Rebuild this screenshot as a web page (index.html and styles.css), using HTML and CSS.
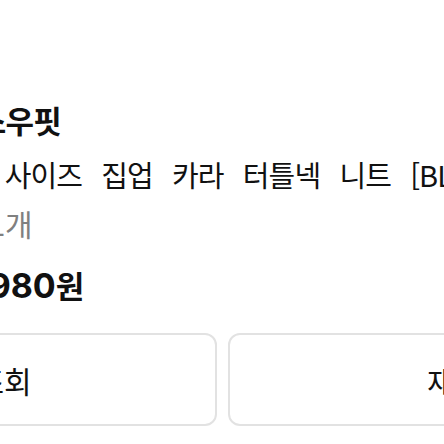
FILE: index.html
```html
<!DOCTYPE html>
<html lang="ko">
<head>
  <meta charset="UTF-8">
  <meta name="viewport" content="width=device-width, initial-scale=1.0">
  <title>주문 상세</title>
  <link rel="stylesheet" href="styles.css">
</head>
<body>
  <div class="page">
    <div class="item">
      <div class="brand">데일리 스튜디오 스우핏</div>
      <div class="name">[남녀]루즈핏 오버 사이즈 집업 카라 터틀넥 니트 [BLACK]</div>
      <div class="qty">옵션 블랙/FREE · 1개</div>
      <div class="price">결제금액 : 129,980<span class="won">원</span></div>
    </div>
    <div class="actions">
      <button class="btn">배송조회</button>
      <button class="btn">재구매</button>
    </div>
  </div>
</body>
</html>
```

FILE: styles.css
```css
html, body { margin: 0; padding: 0; background: #fff; overflow: hidden; }
body { font-family: "Noto Sans CJK KR", "Noto Sans", sans-serif; color: #111; }
.page { width: 973px; margin-left: -264px; padding-top: 100px; }
.item { padding-left: 32px; }
.brand { font-size: 31px; font-weight: 700; line-height: 40px; letter-spacing: -0.8px; white-space: nowrap; }
.name { font-size: 29px; line-height: 40px; margin-top: 14px; letter-spacing: -0.9px; word-spacing: 12px; white-space: nowrap; }
.qty { font-size: 30px; line-height: 40px; margin-top: 9px; color: #808080; letter-spacing: -0.45px; white-space: nowrap; }
.price { font-family: Inter, "Noto Sans CJK KR", sans-serif; font-size: 34px; font-weight: 700; line-height: 40px; margin-top: 22px; white-space: nowrap; }
.won { font-family: "Noto Sans CJK KR", sans-serif; font-size: 31px; }
.actions { display: grid; grid-template-columns: 1fr 1fr; gap: 11px; margin-top: 27px; }
.btn { height: 93px; background: #fff; border: 2px solid #e2e2e2; border-radius: 12px; font-family: inherit; font-size: 30px; color: #111; padding: 0; }
```
